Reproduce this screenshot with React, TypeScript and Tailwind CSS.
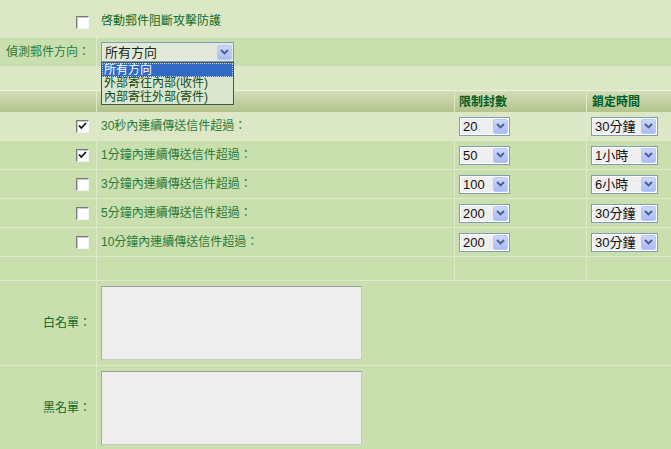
import React from "react";

const fontStack = "font-['Liberation_Sans','Noto_Sans_CJK_TC',sans-serif]";

function Checkbox({ checked = false }: { checked?: boolean }) {
  return (
    <span className="flex h-[13px] w-[13px] items-center justify-center border border-t-[#7b7b7b] border-l-[#7b7b7b] border-b-[#f4f4f4] border-r-[#f4f4f4] bg-white shadow-[inset_1px_1px_0_#c8c8c8]">
      {checked ? (
        <svg width="9" height="8" viewBox="0 0 9 8">
          <path d="M1 3.5 L3.3 6 L8 1" fill="none" stroke="#111" strokeWidth="1.8" />
        </svg>
      ) : null}
    </span>
  );
}

function Arrow() {
  return (
    <span className="flex h-[15px] w-[15px] items-center justify-center rounded-[2px] border border-[#b8c8f2] bg-gradient-to-b from-[#cbd8fc] to-[#a9bcf3]">
      <svg width="9" height="6" viewBox="0 0 9 6">
        <path d="M1 1 L4.5 4.5 L8 1" fill="none" stroke="#4a5e8e" strokeWidth="1.9" />
      </svg>
    </span>
  );
}

function Select({ value, width }: { value: string; width: string }) {
  return (
    <div
      className={`flex h-[19px] ${width} items-center justify-between border border-[#7f9db9] bg-white pl-[1px] pr-[1px]`}
    >
      <span className="flex h-[15px] flex-1 items-center bg-[#efefef] pl-[2px] text-[13px] leading-none text-[#111]">
        {value}
      </span>
      <Arrow />
    </div>
  );
}

const rows = [
  { label: "30秒內連續傳送信件超過：", checked: true, count: "20", time: "30分鐘", hl: true },
  { label: "1分鐘內連續傳送信件超過：", checked: true, count: "50", time: "1小時", hl: false },
  { label: "3分鐘內連續傳送信件超過：", checked: false, count: "100", time: "6小時", hl: false },
  { label: "5分鐘內連續傳送信件超過：", checked: false, count: "200", time: "30分鐘", hl: false },
  { label: "10分鐘內連續傳送信件超過：", checked: false, count: "200", time: "30分鐘", hl: false },
];

const cellLine = "border-l border-[#dfeacb]";

export default function App() {
  return (
    <div
      className={`h-[449px] w-[671px] overflow-hidden bg-[#c9dfad] text-[12px] text-[#1b6c2e] ${fontStack}`}
    >
      <div className="flex h-[38px] items-center bg-[#dbe7c5]">
        <div className="flex w-[96px] justify-end pr-[7px] pt-[7px]">
          <Checkbox />
        </div>
        <div className="pl-[5px] pt-[4px] text-[#0f6a29]">啓動郵件阻斷攻擊防護</div>
      </div>

      <div className="relative z-10 flex h-[28px] bg-[#c9dfad]">
        <div className="flex w-[96px] items-center justify-end pr-[6px] text-[#2b7a3b]">
          偵測郵件方向：
        </div>
        <div className={`${cellLine} flex items-center pl-[4px]`}>
          <div className="relative">
            <div className="flex h-[20px] w-[133px] items-center justify-between border border-[#7f9db9] bg-[#e3e9da] pr-[1px]">
              <span className="pl-[3px] text-[13px] leading-none text-[#1c2a1c]">所有方向</span>
              <Arrow />
            </div>
            <div className="absolute left-0 top-full w-[133px] border border-[#3f5a42] bg-[#dbe6cf] text-[12px] leading-[13px] text-[#134d20]">
              <div className="h-[14px] border border-dotted border-[#c0d0ff] bg-[#316ac5] pl-[1px] text-white">
                所有方向
              </div>
              <div className="h-[14px] pl-[2px]">外部寄往內部(收件)</div>
              <div className="h-[13px] pl-[2px]">內部寄往外部(寄件)</div>
            </div>
          </div>
        </div>
      </div>

      <div className="flex h-[24px] bg-[#dbe7c5]">
        <div className="w-[96px]" />
        <div className={`${cellLine} flex-1`} />
      </div>

      <div className="flex h-[22px] border-t border-[#eef3dc] bg-gradient-to-b from-[#d4ddb6] to-[#b2c38b] font-bold text-[12px] text-[#005c28]">
        <div className="w-[96px]" />
        <div className={`w-[358px] ${cellLine}`} />
        <div className={`flex w-[132px] items-center pl-[4px] ${cellLine}`}>限制封數</div>
        <div className={`flex flex-1 items-center pl-[5px] ${cellLine}`}>鎖定時間</div>
      </div>

      {rows.map((r) => (
        <div
          key={r.label}
          className={`flex h-[29px] border-b border-[#dfeacb] ${r.hl ? "bg-[#dbe7c5]" : "bg-[#c9dfad]"}`}
        >
          <div className="flex w-[96px] items-center justify-end pr-[7px]">
            <Checkbox checked={r.checked} />
          </div>
          <div className={`flex w-[358px] items-center pl-[4px] text-[#2b7a3b] ${cellLine}`}>
            {r.label}
          </div>
          <div className={`flex w-[132px] items-center pl-[4px] ${cellLine}`}>
            <Select value={r.count} width="w-[51px]" />
          </div>
          <div className={`flex flex-1 items-center pl-[4px] ${cellLine}`}>
            <Select value={r.time} width="w-[67px]" />
          </div>
        </div>
      ))}

      <div className="flex h-[24px] border-b border-[#dfeacb]">
        <div className="w-[96px]" />
        <div className={`w-[358px] ${cellLine}`} />
        <div className={`w-[132px] ${cellLine}`} />
        <div className={`flex-1 ${cellLine}`} />
      </div>

      {["白名單：", "黑名單："].map((label) => (
        <div key={label} className="flex h-[85px] border-b border-[#dfeacb]">
          <div className="flex w-[96px] items-center justify-end pr-[5px] text-[#0f6a29]">
            {label}
          </div>
          <div className={`flex flex-1 items-center pl-[4px] ${cellLine}`}>
            <div className="h-[74px] w-[261px] border border-t-[#999999] border-l-[#aaaaaa] border-b-[#c8c8c8] border-r-[#c8c8c8] bg-[#eeeeee]" />
          </div>
        </div>
      ))}
    </div>
  );
}
